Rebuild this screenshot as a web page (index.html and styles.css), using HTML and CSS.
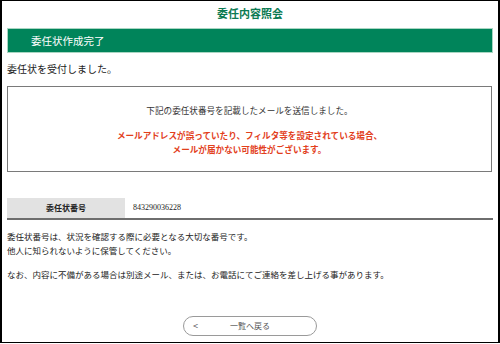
FILE: index.html
```html
<!DOCTYPE html>
<html lang="ja">

<head>
    <meta charset="UTF-8">
    <meta name="viewport" content="width=device-width, initial-scale=1.0">
    <title>委任内容照会</title>
    <link rel="stylesheet" href="styles.css">
</head>

<body>
    <div class="frame">
        <!-- 页面标题 -->
        <h1 class="title">委任内容照会</h1>
        <!-- 绿色标题栏 -->
        <div class="bar">委任状作成完了</div>
        <p class="lead">委任状を受付しました。</p>

        <!-- 提示框 -->
        <div class="notice">
            <p class="notice-txt">下記の委任状番号を記載したメールを送信しました。</p>
            <p class="notice-red">メールアドレスが誤っていたり、フィルタ等を設定されている場合、<br>メールが届かない可能性がございます。</p>
        </div>

        <!-- 委任状番号 -->
        <div class="row">
            <div class="row-th">委任状番号</div>
            <div class="row-td">843290036228</div>
        </div>

        <div class="info">
            <p>委任状番号は、状況を確認する際に必要となる大切な番号です。<br>他人に知られないように保管してください。</p>
            <p>なお、内容に不備がある場合は別途メール、または、お電話にてご連絡を差し上げる事があります。</p>
        </div>

        <div class="btns">
            <a class="back"><span class="arrow">&lt;</span>一覧へ戻る</a>
        </div>
    </div>
</body>

</html>
```

FILE: styles.css
```css
* {
    margin: 0;
    padding: 0;
    box-sizing: border-box;
}

body {
    font-family: "Noto Sans CJK JP", sans-serif;
    color: #333;
    background-color: #fff;
}

.frame {
    width: 500px;
    height: 343px;
    border: 1px solid #000;
    border-left-width: 2px;
    border-right-width: 2px;
    padding: 0 5px;
}

.title {
    height: 27px;
    line-height: 25px;
    font-size: 11px;
    font-weight: bold;
    text-align: center;
    color: #0b7a52;
}

.bar {
    height: 25px;
    line-height: 23px;
    padding-left: 23px;
    font-size: 10.5px;
    color: #fff;
    background-color: #00845a;
    border: 1px solid #a9d6c2;
}

.lead {
    margin-top: 6px;
    height: 20px;
    line-height: 20px;
    font-size: 10px;
    color: #222;
}

.notice {
    margin-top: 7px;
    height: 86px;
    margin-right: 1px;
    border: 1px solid #7a7a7a;
    text-align: center;
    font-size: 8.6px;
    padding-top: 16px;
}

.notice-txt {
    line-height: 14px;
    color: #333;
}

.notice-red {
    margin-top: 11px;
    line-height: 14px;
    font-weight: bold;
    color: #e2401c;
}

.row {
    margin-top: 26px;
    display: flex;
    height: 22px;
    border-bottom: 2px solid #6e6e6e;
    font-size: 8px;
}

.row-th {
    width: 118px;
    background-color: #e2e2e2;
    font-weight: bold;
    text-align: center;
    line-height: 20px;
    color: #222;
}

.row-td {
    padding-left: 8px;
    line-height: 20px;
    font-family: "Liberation Serif", serif;
    font-size: 8px;
    color: #222;
}

.info {
    margin-top: 9px;
    font-size: 8.5px;
    line-height: 14px;
    color: #222;
}

.info p+p {
    margin-top: 10px;
}

.btns {
    margin-top: 35px;
    display: flex;
    justify-content: center;
}

.back {
    position: relative;
    width: 134px;
    height: 20px;
    line-height: 18px;
    border: 1px solid #9a9a9a;
    border-radius: 10px;
    font-size: 8px;
    color: #555;
    text-align: center;
}

.arrow {
    position: absolute;
    left: 9px;
    top: 0;
    font-size: 9px;
}
```
